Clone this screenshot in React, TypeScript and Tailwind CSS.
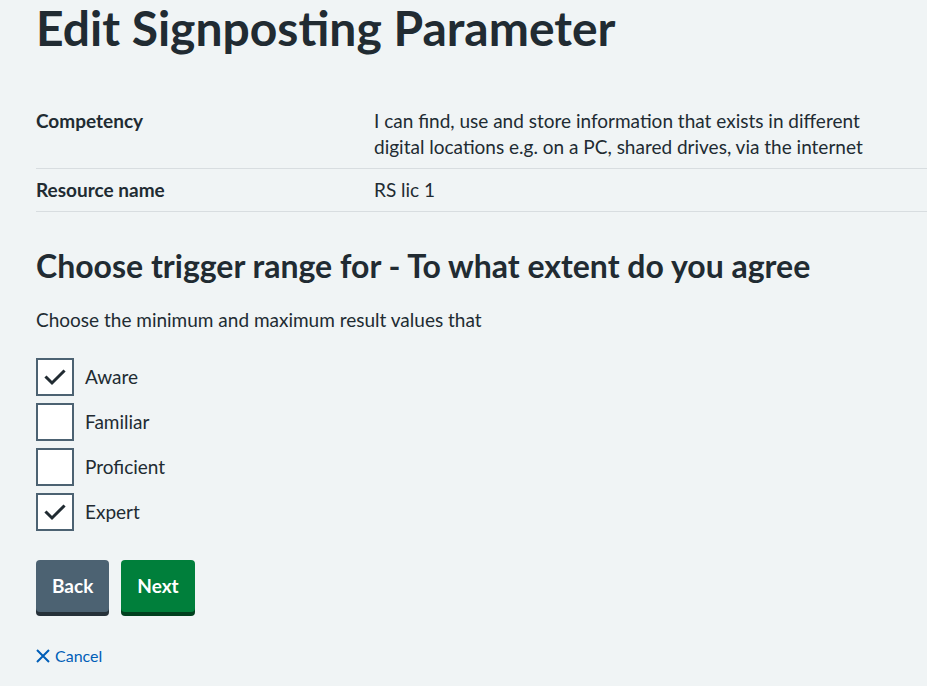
const options = [
  { label: 'Aware', checked: true },
  { label: 'Familiar', checked: false },
  { label: 'Proficient', checked: false },
  { label: 'Expert', checked: true },
];

function Tick() {
  return (
    <svg viewBox="0 0 24 24" className="h-[24px] w-[24px]" fill="none">
      <path d="M3.5 12.5 L9 18 L20.5 6.5" stroke="#212b32" strokeWidth="3" strokeLinecap="square" />
    </svg>
  );
}

export default function App() {
  return (
    <div
      className="min-h-screen overflow-hidden bg-[#f0f4f5] text-[#212b32]"
      style={{ fontFamily: 'Lato, "Noto Sans", sans-serif' }}
    >
      <div className="w-[1000px] pl-[36px]">
        <h1 className="text-[48px] font-bold leading-[56px]">Edit Signposting Parameter</h1>

        {/* Summary list */}
        <dl className="mt-[44px] text-[19px] leading-[26px]">
          <div className="flex border-b border-[#d8dde0] py-[8px]">
            <dt className="w-[338px] shrink-0 font-bold">Competency</dt>
            <dd className="w-[520px]">
              I can find, use and store information that exists in different digital locations e.g. on a PC,
              shared drives, via the internet
            </dd>
          </div>
          <div className="flex border-b border-[#d8dde0] py-[8px]">
            <dt className="w-[338px] shrink-0 font-bold">Resource name</dt>
            <dd>RS lic 1</dd>
          </div>
        </dl>

        <h2 className="mt-[34px] text-[32px] font-bold leading-[40px]">
          Choose trigger range for - To what extent do you agree
        </h2>

        <p className="mt-[20px] text-[19px] leading-[28px]">Choose the minimum and maximum result values that</p>

        <div className="mt-[24px] flex flex-col gap-[7px]">
          {options.map((o) => (
            <label key={o.label} className="flex items-center gap-[11px]">
              <span className="flex h-[38px] w-[38px] items-center justify-center border-2 border-[#4c6272] bg-white">
                {o.checked && <Tick />}
              </span>
              <span className="text-[19px]">{o.label}</span>
            </label>
          ))}
        </div>

        <div className="mt-[29px] flex gap-[12px]">
          <button className="h-[52px] rounded-[4px] bg-[#4c6272] px-[16px] text-[19px] font-bold text-white shadow-[0_4px_0_#263139]">
            Back
          </button>
          <button className="h-[52px] rounded-[4px] bg-[#007f3b] px-[16px] text-[19px] font-bold text-white shadow-[0_4px_0_#00401e]">
            Next
          </button>
        </div>

        <a className="mt-[32px] flex items-center gap-[5px] text-[16px] text-[#005eb8]">
          <svg viewBox="0 0 14 14" className="h-[14px] w-[14px]" fill="none">
            <path d="M1 1 L13 13 M13 1 L1 13" stroke="#005eb8" strokeWidth="2" />
          </svg>
          Cancel
        </a>
      </div>
    </div>
  );
}
